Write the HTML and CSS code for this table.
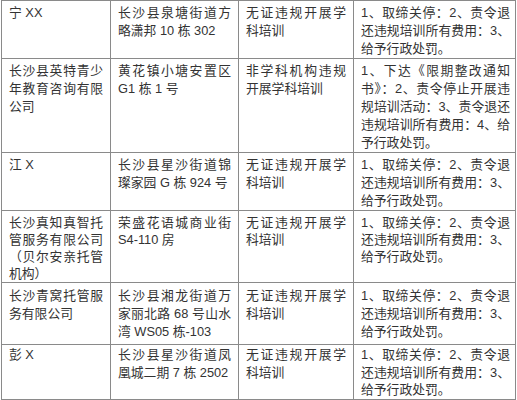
FILE: index.html
```html
<!DOCTYPE html>
<html lang="zh-CN">
<head>
<meta charset="utf-8">
<link rel="stylesheet" href="styles.css">
</head>
<body>
<table class="grid">
  <colgroup>
    <col class="c1"><col class="c2"><col class="c3"><col class="c4">
  </colgroup>
  <tr class="r1">
    <td>宁 XX</td>
    <td>长沙县泉塘街道方略潇邦 10 栋 302</td>
    <td>无证违规开展学科培训</td>
    <td class="act">1、取缔关停：2、责令退还违规培训所有费用：3、给予行政处罚。</td>
  </tr>
  <tr class="r2">
    <td>长沙县英特青少年教育咨询有限公司</td>
    <td>黄花镇小塘安置区 G1 栋 1 号</td>
    <td>非学科机构违规开展学科培训</td>
    <td class="act">1、下达《限期整改通知书》：2、责令停止开展违规培训活动：3、责令退还违规培训所有费用：4、给予行政处罚。</td>
  </tr>
  <tr class="r3">
    <td>江 X</td>
    <td>长沙县星沙街道锦璨家园 G 栋 924 号</td>
    <td>无证违规开展学科培训</td>
    <td class="act">1、取缔关停：2、责令退还违规培训所有费用：3、给予行政处罚。</td>
  </tr>
  <tr class="r4">
    <td>长沙真知真智托管服务有限公司（贝尔安亲托管机构）</td>
    <td>荣盛花语城商业街 S4-110 房</td>
    <td>无证违规开展学科培训</td>
    <td class="act">1、取缔关停：2、责令退还违规培训所有费用：3、给予行政处罚。</td>
  </tr>
  <tr class="r5">
    <td>长沙青窝托管服务有限公司</td>
    <td>长沙县湘龙街道万家丽北路 68 号山水湾 WS05 栋-103</td>
    <td>无证违规开展学科培训</td>
    <td class="act">1、取缔关停：2、责令退还违规培训所有费用：3、给予行政处罚。</td>
  </tr>
  <tr class="r6">
    <td>彭 X</td>
    <td>长沙县星沙街道凤凰城二期 7 栋 2502</td>
    <td>无证违规开展学科培训</td>
    <td class="act">1、取缔关停：2、责令退还违规培训所有费用：3、给予行政处罚。</td>
  </tr>
</table>
</body>
</html>
```
FILE: styles.css
```css
html, body {
  margin: 0;
  padding: 0;
  background: #ffffff;
}

.grid {
  margin-left: 1px;
  width: 515px;
  table-layout: fixed;
  border-collapse: collapse;
  font-family: "Liberation Sans", "Noto Sans CJK SC", sans-serif;
  font-size: 12.8px;
  line-height: 18px;
  color: #333333;
}

.c1 { width: 109px; }
.c2 { width: 128px; }
.c3 { width: 115px; }
.c4 { width: 162px; }

.grid td {
  border: 1px solid #8a8a8a;
  vertical-align: top;
  padding: 3px 7px 0 7px;
  text-align: justify;
}

.grid td.act {
  padding-right: 5px;
}

.r4 td {
  line-height: 17px;
}

.r5 td {
  padding-top: 4px;
  padding-bottom: 3px;
}

.r6 td {
  padding-top: 1px;
  line-height: 17.5px;
}
```
